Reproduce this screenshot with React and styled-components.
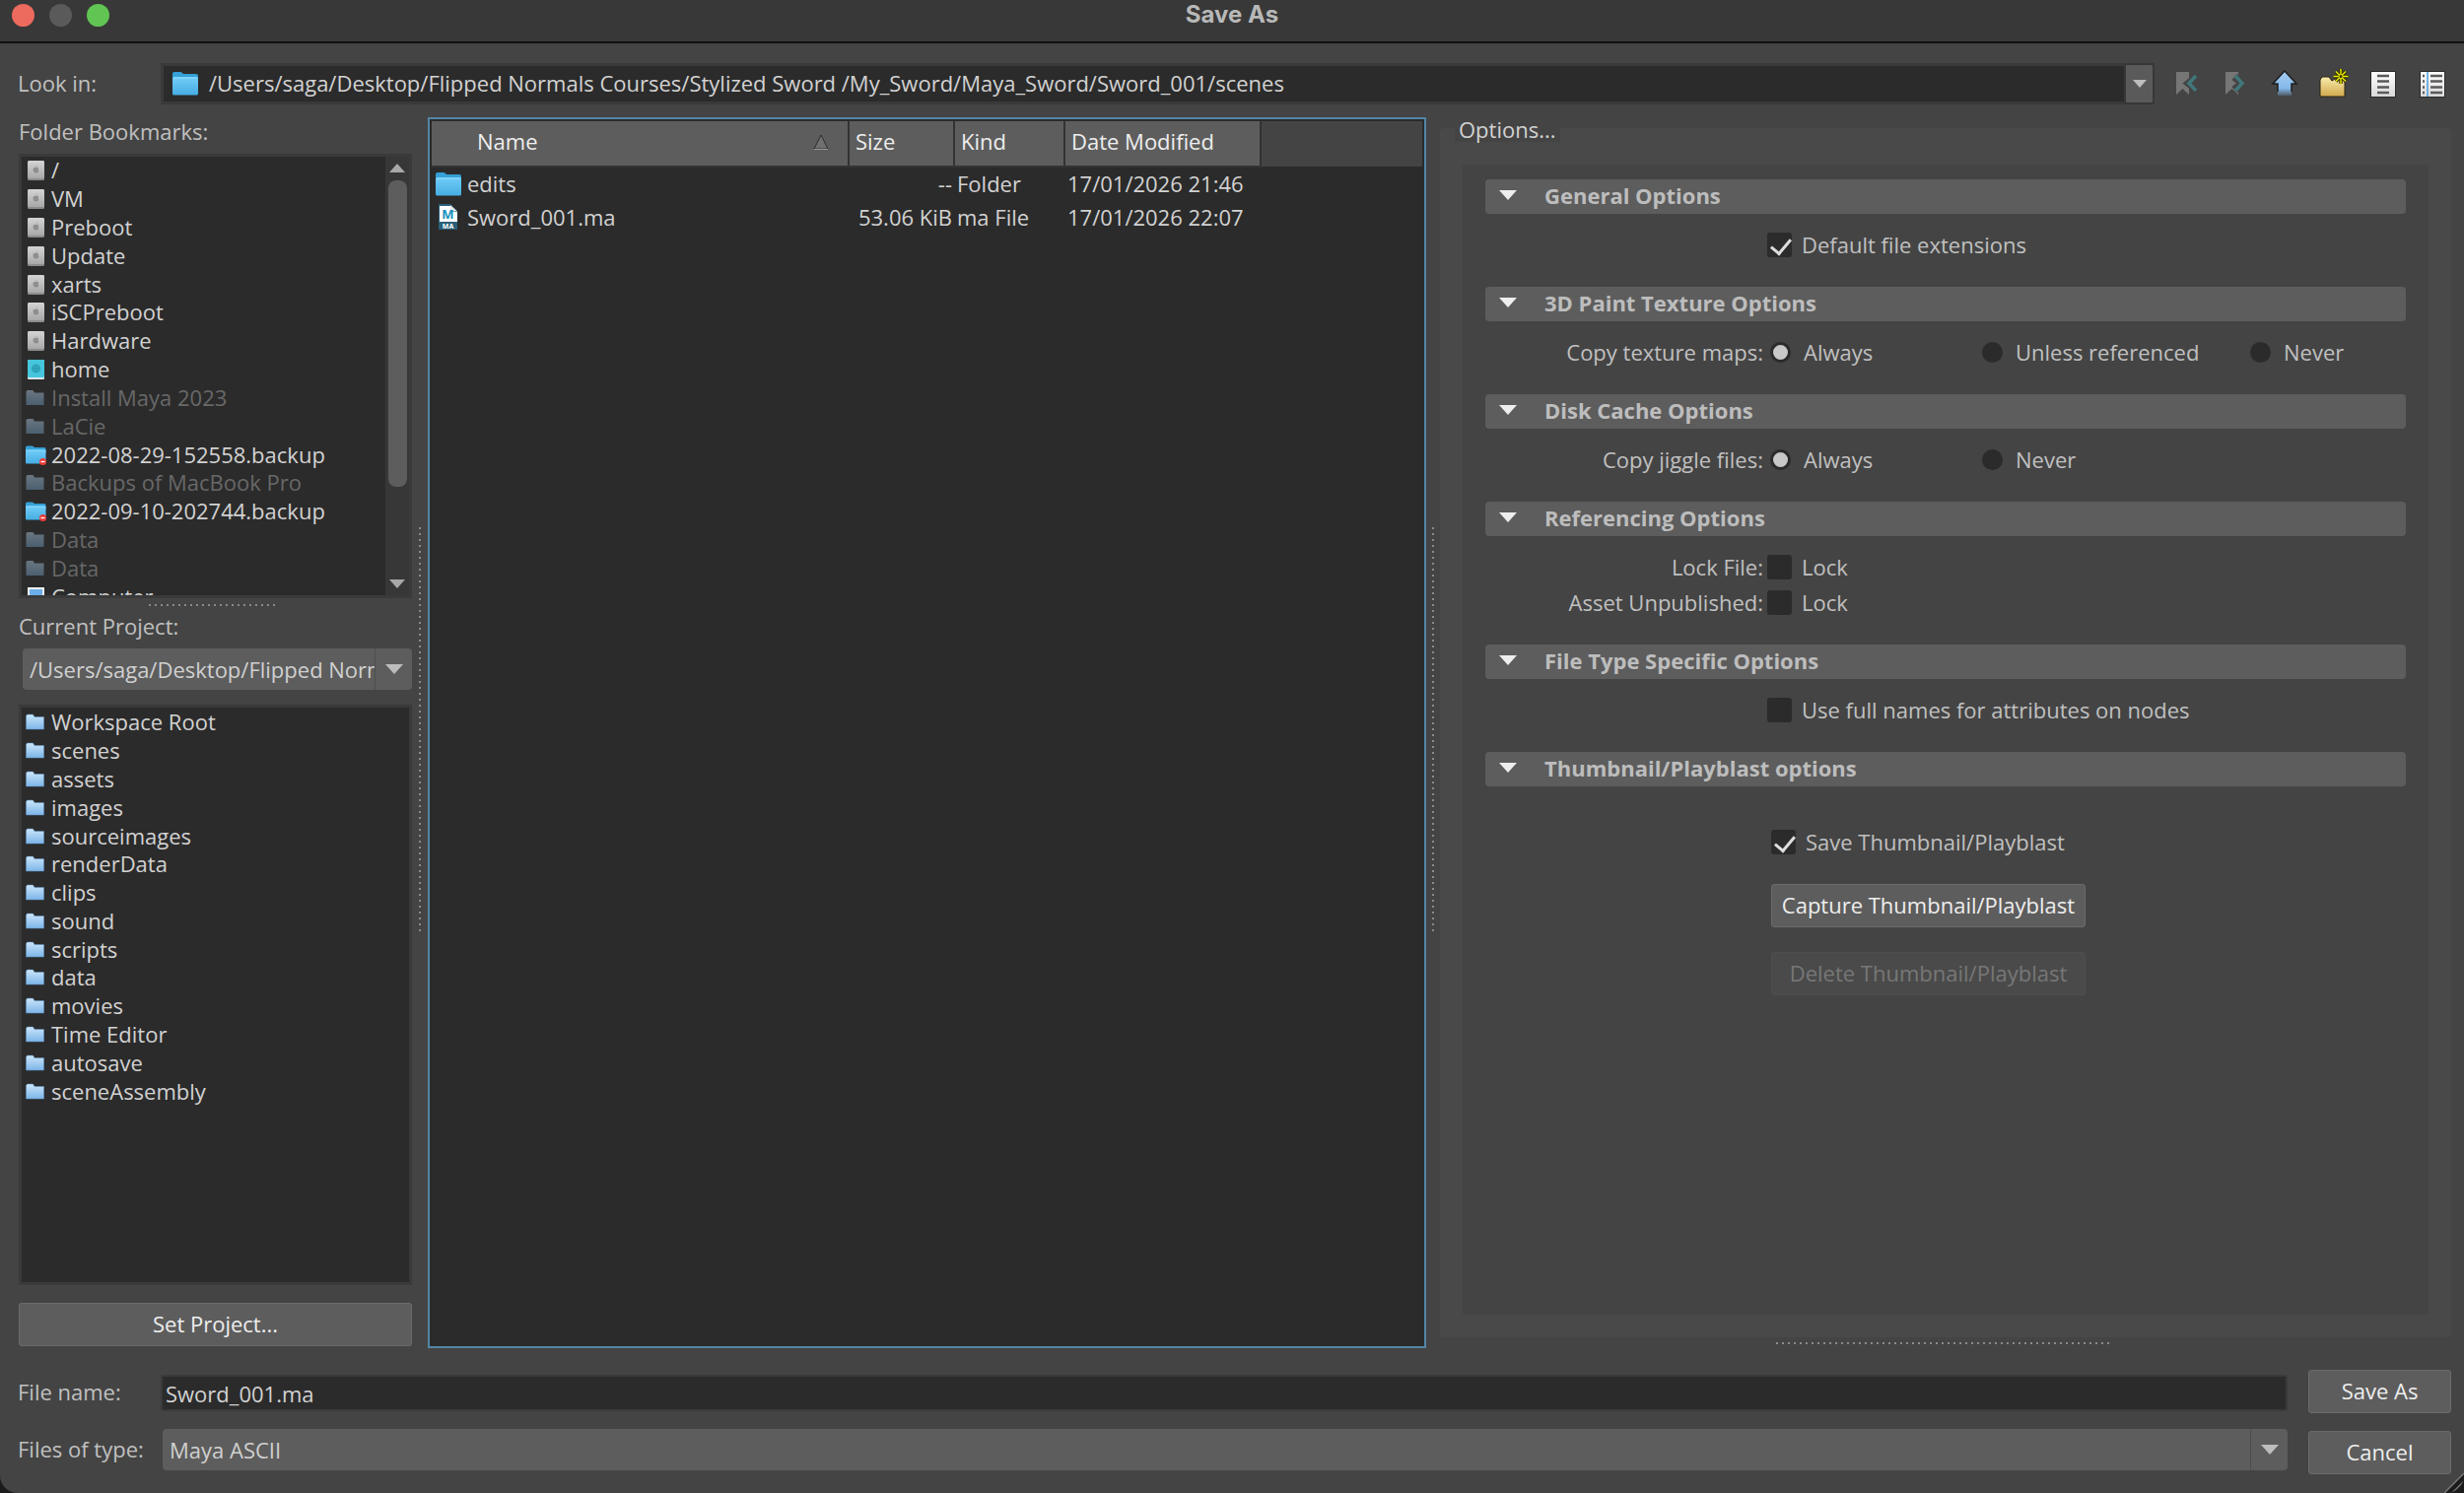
import styled, { createGlobalStyle, css } from "styled-components";

const bookmarks = [
    { name: "/", icon: "drive" },
    { name: "VM", icon: "drive" },
    { name: "Preboot", icon: "drive" },
    { name: "Update", icon: "drive" },
    { name: "xarts", icon: "drive" },
    { name: "iSCPreboot", icon: "drive" },
    { name: "Hardware", icon: "drive" },
    { name: "home", icon: "network" },
    { name: "Install Maya 2023", icon: "missing" },
    { name: "LaCie", icon: "missing" },
    { name: "2022-08-29-152558.backup", icon: "locked" },
    { name: "Backups of MacBook Pro", icon: "missing" },
    { name: "2022-09-10-202744.backup", icon: "locked" },
    { name: "Data", icon: "missing" },
    { name: "Data", icon: "missing" },
    { name: "Computer", icon: "computer" },
];

const projectFolders = [
    "Workspace Root",
    "scenes",
    "assets",
    "images",
    "sourceimages",
    "renderData",
    "clips",
    "sound",
    "scripts",
    "data",
    "movies",
    "Time Editor",
    "autosave",
    "sceneAssembly",
];

const files = [
    { name: "edits", size: "--", kind: "Folder", date: "17/01/2026 21:46", icon: "folder" },
    { name: "Sword_001.ma", size: "53.06 KiB", kind: "ma File", date: "17/01/2026 22:07", icon: "maya" },
];

function BlueFolder({ width = 28, height = 24 }) {
    return (
        <svg width={width} height={height} viewBox="0 0 28 24">
            <path d="M1 2q0-2 2-2h6q1 0 2 1l1 1h13q2 0 2 2v4H1z" fill="#35a0d6" />
            <path d="M1 6.500q0-1.500 2-1.500h22q2 0 2 1.500V22q0 1.500-1.500 1.500h-23Q1 23.500 1 22z" fill="url(#blueFolder)" />
            <path d="M2 6h24" stroke="#8ddcff" strokeWidth="1" />
        </svg>
    );
}

function Defs() {
    return (
        <svg width="0" height="0" aria-hidden="true">
            <defs>
                <linearGradient id="blueFolder" x1="0" y1="0" x2="0" y2="1">
                    <stop offset="0" stopColor="#72cdf8" />
                    <stop offset="1" stopColor="#46ade2" />
                </linearGradient>
                <linearGradient id="paleFolder" x1="0" y1="0" x2="0" y2="1">
                    <stop offset="0" stopColor="#cbe6fb" />
                    <stop offset="1" stopColor="#7db5e8" />
                </linearGradient>
                <linearGradient id="dimFolder" x1="0" y1="0" x2="0" y2="1">
                    <stop offset="0" stopColor="#6a7680" />
                    <stop offset="1" stopColor="#4b5f70" />
                </linearGradient>
                <linearGradient id="driveBody" x1="0" y1="0" x2="0" y2="1">
                    <stop offset="0" stopColor="#d4d4d4" />
                    <stop offset="1" stopColor="#a8a8a8" />
                </linearGradient>
                <linearGradient id="upArrow" x1="0" y1="0" x2="0" y2="1">
                    <stop offset="0" stopColor="#a5cdf2" />
                    <stop offset="0.7" stopColor="#84b8ea" />
                    <stop offset="1" stopColor="#4f5b66" />
                </linearGradient>
                <linearGradient id="newFolder" x1="0" y1="0" x2="0" y2="1">
                    <stop offset="0" stopColor="#f8ecae" />
                    <stop offset="1" stopColor="#d3a94c" />
                </linearGradient>
                <linearGradient id="paper" x1="0" y1="0" x2="0" y2="1">
                    <stop offset="0" stopColor="#ffffff" />
                    <stop offset="1" stopColor="#d8d8d8" />
                </linearGradient>
            </defs>
        </svg>
    );
}

function PlaceIcon({ type }) {
    if (type === "drive") {
        return (
            <svg width="22" height="22" viewBox="0 0 22 22">
                <rect x="3" y="1" width="17" height="20" rx="1.500" fill="#8c8c8c" />
                <rect x="3" y="1" width="17" height="18" rx="1.500" fill="url(#driveBody)" />
                <path d="M11.500 7.500q0-1.500 1.300-2.200q.1 1.500-1.300 2.200zM8.500 10q.2-2.200 2-2.200l1 .3 1-.3q1 0 1.700.9-1.200 1.500.2 2.700-.7 2.100-1.800 2.100l-1.100-.3-1.100.3Q8.600 13 8.500 10z" fill="#8e8e8e" />
            </svg>
        );
    }
    if (type === "network") {
        return (
            <svg width="22" height="22" viewBox="0 0 22 22">
                <rect x="3" y="1" width="17" height="20" rx="1" fill="#d9e4e6" />
                <rect x="3" y="1" width="17" height="18" rx="1" fill="#45c6dc" />
                <circle cx="11.500" cy="10" r="4" fill="#35aac2" stroke="#2a9bb3" />
                <path d="M7.500 10h8M11.500 6v8" stroke="#2a9bb3" strokeWidth="0.800" />
            </svg>
        );
    }
    if (type === "computer") {
        return (
            <svg width="22" height="22" viewBox="0 0 22 22">
                <rect x="3" y="1" width="17" height="15" fill="#f2f2f2" />
                <rect x="5" y="3" width="13" height="11" fill="#6caeea" />
                <path d="M8 19h7" stroke="#d0d0d0" strokeWidth="3" />
            </svg>
        );
    }
    if (type === "locked") {
        return (
            <svg width="22" height="22" viewBox="0 0 22 22">
                <path d="M1 3q0-1.500 1.500-1.500H8l2 1.500h10q1.500 0 1.500 1.500V9H1z" fill="#35a0d6" />
                <rect x="1" y="5.500" width="20.500" height="14" rx="1" fill="url(#blueFolder)" />
                <path d="M1.500 6h19.500" stroke="#8ddcff" />
                <circle cx="18.500" cy="17.500" r="3.500" fill="#ec3b34" />
                <path d="M16.500 17.500h4" stroke="#fff" strokeWidth="1.300" />
            </svg>
        );
    }
    const dim = type === "missing";
    return (
        <svg width="22" height="22" viewBox="0 0 22 22">
            <path
                d="M1.500 4.500L2.500 3h6l1.500 2.500h9.500V18h-18z"
                fill={dim ? "url(#dimFolder)" : "url(#paleFolder)"}
                stroke={dim ? "none" : "#5f93c4"}
                strokeWidth="0.500"
            />
        </svg>
    );
}

function MayaFile() {
    return (
        <svg width="28" height="28" viewBox="0 0 28 28">
            <path d="M4 1h12l7 7v19H4z" fill="#2a6079" />
            <path d="M5 3h11v6h7v10H5z" fill="#fff" />
            <path d="M16 2v6.500h7z" fill="#e8e8e8" />
            <text x="13.500" y="16" textAnchor="middle" fontFamily="Open Sans" fontWeight="700" fontSize="13" fill="#1490bd">M</text>
            <text x="13.500" y="26" textAnchor="middle" fontFamily="Open Sans" fontWeight="700" fontSize="7" fill="#fff">MA</text>
        </svg>
    );
}

function BackIcon() {
    return (
        <svg width="28" height="32" viewBox="0 0 28 32">
            <path d="M4 4h13v23l-6.500-6L4 27z" fill="#767676" />
            <path d="M24 9l-8 6.500 8 6.500" fill="none" stroke="#444" strokeWidth="7" />
            <path d="M24 8l-7 7.500 7 7.500" fill="none" stroke="#40777b" strokeWidth="3.500" />
        </svg>
    );
}

function ForwardIcon() {
    return (
        <svg width="28" height="32" viewBox="0 0 28 32">
            <path d="M4 4h13v23l-6.500-6L4 27z" fill="#767676" />
            <path d="M13 9l8 6.500-8 6.500" fill="none" stroke="#444" strokeWidth="8" />
            <path d="M14 8l7 7.500-7 7.500" fill="none" stroke="#40777b" strokeWidth="3.500" />
        </svg>
    );
}

function UpIcon() {
    return (
        <svg width="28" height="32" viewBox="0 0 28 32">
            <path d="M14 3l12 13h-5v12H7V16H2z" fill="url(#upArrow)" />
            <path d="M7 24V16H2L14 3l12 13h-5v8" fill="none" stroke="#1c1c1c" strokeWidth="1.500" />
        </svg>
    );
}

function NewFolderIcon() {
    return (
        <svg width="32" height="32" viewBox="0 0 32 32">
            <path d="M2 12l2-3h7l3 4 3-2h10v18H2z" fill="url(#newFolder)" stroke="#2b2412" />
            <path d="M23 1v15M15.500 8.500h15M18 3.500l10 10M28 3.500l-10 10" stroke="#333300" strokeWidth="3.500" />
            <path d="M23 1v15M15.500 8.500h15M18 3.500l10 10M28 3.500l-10 10" stroke="#e6e600" strokeWidth="1.500" />
            <circle cx="23" cy="8.500" r="1.500" fill="#333300" />
        </svg>
    );
}

function ListIcon() {
    return (
        <svg width="28" height="32" viewBox="0 0 28 32">
            <rect x="1.500" y="3.500" width="25" height="26" fill="url(#paper)" stroke="#2a2a2a" />
            <path d="M8 8h12M8 13.500h12M8 19.500h12M8 25h12" stroke="#5a5a5a" strokeWidth="2.500" />
        </svg>
    );
}

function DetailIcon() {
    return (
        <svg width="28" height="32" viewBox="0 0 28 32">
            <rect x="1.500" y="3.500" width="25" height="26" fill="url(#paper)" stroke="#2a2a2a" />
            <path d="M4 8h2M4 13.500h2M4 19.500h2M4 25h2M12 8h12M12 13.500h12M12 19.500h12M12 25h12" stroke="#5a5a5a" strokeWidth="2.500" />
            <path d="M9 4v25" stroke="#4a9fe0" strokeWidth="1.500" />
        </svg>
    );
}

function Triangle({ up, width = 18, height = 10, color = "#bdbdbd" }) {
    return (
        <svg width={width} height={height} viewBox="0 0 18 10">
            <path d={up ? "M0 10L9 0l9 10z" : "M0 0h18L9 10z"} fill={color} />
        </svg>
    );
}

function Section({ title, children, large }) {
    return (
        <OptionSection>
            <SectionHeader type="button">
                <Triangle color="#eee" />
                <span>{title}</span>
            </SectionHeader>
            <SectionBody $large={large}>{children}</SectionBody>
        </OptionSection>
    );
}

function Check({ id, label, checked }) {
    return (
        <Choice htmlFor={id}>
            <Checkbox id={id} type="checkbox" defaultChecked={checked} />
            {label}
        </Choice>
    );
}

function Radio({ name, label, checked }) {
    return (
        <Choice>
            <RadioInput type="radio" name={name} defaultChecked={checked} />
            {label}
        </Choice>
    );
}

function App() {
    return (
        <>
            <GlobalStyle />
            <Defs />
            <Dialog>
                <TitleBar>
                    <Light $color="#ed6a5e" aria-label="Close" />
                    <Light $color="#5a5a5a" aria-label="Minimise" />
                    <Light $color="#61c554" aria-label="Zoom" />
                    <Title>Save As</Title>
                </TitleBar>

                <LookIn>
                    <FieldLabel htmlFor="look-in">Look in:</FieldLabel>
                    <PathField>
                        <BlueFolder />
                        <PathInput id="look-in" defaultValue="/Users/saga/Desktop/Flipped Normals Courses/Stylized Sword /My_Sword/Maya_Sword/Sword_001/scenes" />
                        <PathButton aria-label="Recent folders"><Triangle width={14} height={8} /></PathButton>
                    </PathField>
                    <Toolbar>
                        <ToolButton aria-label="Back"><BackIcon /></ToolButton>
                        <ToolButton aria-label="Forward"><ForwardIcon /></ToolButton>
                        <ToolButton aria-label="Parent folder"><UpIcon /></ToolButton>
                        <ToolButton aria-label="New folder"><NewFolderIcon /></ToolButton>
                        <ToolButton aria-label="List view"><ListIcon /></ToolButton>
                        <ToolButton aria-label="Detail view"><DetailIcon /></ToolButton>
                    </Toolbar>
                </LookIn>

                <Main>
                    <Sidebar>
                        <SideLabel>Folder Bookmarks:</SideLabel>
                        <BookmarkPanel>
                            <List $height={461}>
                                {bookmarks.map((item, i) => (
                                    <ListItem key={i} $dim={item.icon === "missing"}>
                                        <PlaceIcon type={item.icon} />
                                        <span>{item.name}</span>
                                    </ListItem>
                                ))}
                            </List>
                            <Scrollbar>
                                <Triangle up width={16} height={9} color="#a8a8a8" />
                                <ScrollThumb />
                                <Triangle width={16} height={9} color="#a8a8a8" />
                            </Scrollbar>
                        </BookmarkPanel>
                        <HandleRow><Handle $length={130} /></HandleRow>
                        <SideLabel as="label" htmlFor="project">Current Project:</SideLabel>
                        <ProjectSelect>
                            <Select id="project">
                                <option>/Users/saga/Desktop/Flipped Normals Courses</option>
                            </Select>
                            <SelectArrow><Triangle /></SelectArrow>
                        </ProjectSelect>
                        <ProjectPanel>
                            <List $height={403}>
                                {projectFolders.map((name) => (
                                    <ListItem key={name}>
                                        <PlaceIcon type="folder" />
                                        <span>{name}</span>
                                    </ListItem>
                                ))}
                            </List>
                        </ProjectPanel>
                        <Button>Set Project...</Button>
                    </Sidebar>

                    <Splitter><Handle $vertical $length={412} /></Splitter>

                    <FilePanel>
                        <FileTable>
                            <colgroup>
                                <col width="423" />
                                <col width="107" />
                                <col width="112" />
                                <col width="199" />
                                <col />
                            </colgroup>
                            <thead>
                                <tr>
                                    <NameHead>
                                        <div>
                                            Name
                                            <svg width="18" height="18" viewBox="0 0 18 18">
                                                <path d="M9 2L2 16h14z" fill="#707070" stroke="#2b2b2b" />
                                                <path d="M2 16.500h14" stroke="#999" />
                                            </svg>
                                        </div>
                                    </NameHead>
                                    <Head>Size</Head>
                                    <Head>Kind</Head>
                                    <Head>Date Modified</Head>
                                    <EmptyHead />
                                </tr>
                            </thead>
                            <tbody>
                                {files.map((file) => (
                                    <tr key={file.name}>
                                        <Cell>
                                            <FileName>
                                                {file.icon === "folder" ? <BlueFolder /> : <MayaFile />}
                                                {file.name}
                                            </FileName>
                                        </Cell>
                                        <Cell $right>{file.size}</Cell>
                                        <Cell>{file.kind}</Cell>
                                        <Cell>{file.date}</Cell>
                                        <Cell />
                                    </tr>
                                ))}
                            </tbody>
                        </FileTable>
                    </FilePanel>

                    <Splitter><Handle $vertical $length={412} /></Splitter>

                    <OptionsColumn>
                        <OptionsGroup>
                            <Legend>Options...</Legend>
                            <OptionsArea>
                                <Section title="General Options">
                                    <OptionRow>
                                        <span />
                                        <Check id="default-ext" label="Default file extensions" checked />
                                    </OptionRow>
                                </Section>
                                <Section title="3D Paint Texture Options">
                                    <OptionRow>
                                        <span>Copy texture maps:</span>
                                        <RadioGroup>
                                            <Radio name="texture" label="Always" checked />
                                            <Radio name="texture" label="Unless referenced" />
                                            <Radio name="texture" label="Never" />
                                        </RadioGroup>
                                    </OptionRow>
                                </Section>
                                <Section title="Disk Cache Options">
                                    <OptionRow>
                                        <span>Copy jiggle files:</span>
                                        <RadioGroup>
                                            <Radio name="jiggle" label="Always" checked />
                                            <Radio name="jiggle" label="Never" />
                                        </RadioGroup>
                                    </OptionRow>
                                </Section>
                                <Section title="Referencing Options">
                                    <OptionRow>
                                        <span>Lock File:</span>
                                        <Check id="lock-file" label="Lock" />
                                    </OptionRow>
                                    <OptionRow>
                                        <span>Asset Unpublished:</span>
                                        <Check id="lock-asset" label="Lock" />
                                    </OptionRow>
                                </Section>
                                <Section title="File Type Specific Options">
                                    <OptionRow>
                                        <span />
                                        <Check id="full-names" label="Use full names for attributes on nodes" />
                                    </OptionRow>
                                </Section>
                                <Section title="Thumbnail/Playblast options" large>
                                    <OptionRow $indent>
                                        <span />
                                        <Check id="save-thumb" label="Save Thumbnail/Playblast" checked />
                                    </OptionRow>
                                    <OptionRow $indent>
                                        <span />
                                        <Button $wide>Capture Thumbnail/Playblast</Button>
                                    </OptionRow>
                                    <OptionRow $indent>
                                        <span />
                                        <Button $wide disabled>Delete Thumbnail/Playblast</Button>
                                    </OptionRow>
                                </Section>
                            </OptionsArea>
                        </OptionsGroup>
                        <HandleRow $short><Handle $length={340} /></HandleRow>
                    </OptionsColumn>
                </Main>

                <Footer>
                    <Fields>
                        <FieldLabel htmlFor="file-name">File name:</FieldLabel>
                        <NameInput id="file-name" defaultValue="Sword_001.ma" />
                        <FieldLabel htmlFor="file-type">Files of type:</FieldLabel>
                        <TypeSelect>
                            <Select id="file-type">
                                <option>Maya ASCII</option>
                            </Select>
                            <SelectArrow><Triangle /></SelectArrow>
                        </TypeSelect>
                    </Fields>
                    <Actions>
                        <Button>Save As</Button>
                        <Button>Cancel</Button>
                    </Actions>
                </Footer>
                <SizeGrip width="20" height="20" viewBox="0 0 20 20">
                    <path d="M20 0v20H0z" fill="#1b1b1b" />
                    <path d="M0 20L20 0M8 20L20 8" stroke="#777" strokeWidth="1.500" />
                </SizeGrip>
            </Dialog>
        </>
    );
}

export default App;

const GlobalStyle = createGlobalStyle`
    * {
        box-sizing: border-box;
    }
    body {
        margin: 0;
        background: #1b1b1b;
        color: #c0c0c0;
        font: 500 22px/29px "Open Sans", "Noto Sans", sans-serif;
    }
    button, input, select {
        font: inherit;
        color: inherit;
        margin: 0;
    }
    svg {
        display: block;
        flex: none;
    }
`;

const inset = css`
    background: #2b2b2b;
    border: 3px solid #3a3a3a;
`;

const Dialog = styled.div`
    position: relative;
    display: flex;
    flex-direction: column;
    min-height: 100vh;
    background: #444;
    border-radius: 0 0 18px 18px;
    overflow: hidden;
`;

const TitleBar = styled.header`
    display: flex;
    align-items: center;
    gap: 15px;
    height: 44px;
    padding: 0 12px 12px;
    background: #383838;
    border-bottom: 2px solid #111;
`;

const Light = styled.button`
    width: 23px;
    height: 23px;
    padding: 0;
    border: none;
    border-radius: 50%;
    background: ${(p) => p.$color};
`;

const Title = styled.h1`
    flex: 1;
    margin: 0 114px 2px 0;
    font-family: Inter, sans-serif;
    font-size: 24px;
    font-weight: 700;
    text-align: center;
    color: #b8b8b8;
`;

const LookIn = styled.div`
    display: flex;
    align-items: center;
    height: 42px;
    margin: 20px 18px 13px;
`;

const FieldLabel = styled.label`
    flex: none;
    width: 145px;
    padding-bottom: 2px;
`;

const PathField = styled.div`
    ${inset}
    flex: 1;
    display: flex;
    align-items: center;
    height: 42px;
    padding-left: 8px;
    border-right: none;
    color: #d2d2d2;
`;

const PathInput = styled.input`
    flex: 1;
    min-width: 0;
    height: 36px;
    padding: 0 10px 2px;
    border: none;
    outline: none;
    background: transparent;
`;

const PathButton = styled.button`
    display: flex;
    align-items: center;
    justify-content: center;
    width: 31px;
    height: 42px;
    padding: 0;
    border: 2px solid #373737;
    border-radius: 3px;
    background: #5a5a5a;
`;

const Toolbar = styled.div`
    display: flex;
    align-items: center;
    gap: 22px;
    padding-left: 18px;
`;

const ToolButton = styled.button`
    display: flex;
    align-items: center;
    justify-content: center;
    width: 28px;
    height: 32px;
    padding: 0;
    border: none;
    background: none;
`;

const Main = styled.main`
    flex: 1;
    display: grid;
    grid-template-columns: 399px 16px minmax(0, 1013fr) 14px minmax(0, 1026fr);
    padding: 0 13px 0 19px;
`;

const Sidebar = styled.aside`
    display: flex;
    flex-direction: column;
    padding-bottom: 2px;
`;

const SideLabel = styled.div`
    display: block;
    height: 37px;
    line-height: 28px;
`;

const BookmarkPanel = styled.div`
    ${inset}
    display: flex;
    height: 451px;
    overflow: hidden;
`;

const ProjectPanel = styled.div`
    ${inset}
    flex: 1;
    margin: 15px 0 18px;
    padding-top: 1px;
`;

const List = styled.ul`
    flex: 1;
    display: grid;
    grid-auto-rows: 1fr;
    height: ${(p) => p.$height}px;
    margin: 0;
    padding: 0 0 0 3px;
    list-style: none;
`;

const ListItem = styled.li`
    display: flex;
    align-items: center;
    gap: 5px;
    color: ${(p) => (p.$dim ? "#686868" : "#d2d2d2")};
    line-height: 26px;
    white-space: nowrap;
    span {
        padding-bottom: 2px;
    }
`;

const Scrollbar = styled.div`
    display: flex;
    flex-direction: column;
    align-items: center;
    justify-content: space-between;
    gap: 8px;
    width: 24px;
    padding: 7px 0;
    background: #373737;
`;

const ScrollThumb = styled.div`
    width: 19px;
    height: 311px;
    margin-bottom: auto;
    border-radius: 8px;
    background: #5d5d5d;
`;

const HandleRow = styled.div`
    display: flex;
    align-items: center;
    justify-content: center;
    height: ${(p) => (p.$short ? 11 : 14)}px;
    padding-right: 5px;
`;

const Handle = styled.div`
    flex: none;
    width: ${(p) => (p.$vertical ? 2 : p.$length)}px;
    height: ${(p) => (p.$vertical ? p.$length : 2)}px;
    background: repeating-linear-gradient(${(p) => (p.$vertical ? "180deg" : "90deg")}, #8a8a8a 0 2px, transparent 2px 6px);
`;

const Splitter = styled.div`
    display: flex;
    align-items: center;
    justify-content: center;
    padding-bottom: 6px;
`;

const SelectBox = styled.div`
    display: flex;
    height: 42px;
    border-radius: 4px;
    background: #5d5d5d;
    color: #d0d0d0;
    overflow: hidden;
`;

const ProjectSelect = styled(SelectBox)`
    margin-left: 4px;
`;

const TypeSelect = styled(SelectBox)`
    margin-left: 2px;
`;

const Select = styled.select`
    flex: 1;
    min-width: 0;
    padding: 0 0 0 7px;
    border: none;
    outline: none;
    appearance: none;
    background: transparent;
`;

const SelectArrow = styled.span`
    display: flex;
    align-items: center;
    justify-content: center;
    width: 38px;
    border-left: 1px solid #4d4d4d;
    pointer-events: none;
`;

const Button = styled.button`
    height: 44px;
    width: ${(p) => (p.$wide ? "319px" : "100%")};
    padding: 0 0 2px;
    border: 1px solid #6b6b6b;
    border-radius: 3px;
    background: #5d5d5d;
    color: #eee;
    white-space: nowrap;
    &:disabled {
        border-color: #4e4e4e;
        background: #4a4a4a;
        color: #777;
    }
`;

const FilePanel = styled.div`
    border: 2px solid #5285a6;
    padding: 2px;
    background: #2b2b2b;
`;

const FileTable = styled.table`
    width: 100%;
    table-layout: fixed;
    border-collapse: collapse;
    color: #d2d2d2;
`;

const Head = styled.th`
    height: 46px;
    padding: 0 0 4px 6px;
    border-right: 2px solid #333;
    border-bottom: 2px solid #333;
    background: #5d5d5d;
    color: #eee;
    font-weight: 500;
    text-align: left;
    white-space: nowrap;
`;

const NameHead = styled(Head)`
    padding: 0 18px 4px 46px;
    div {
        display: flex;
        align-items: center;
        justify-content: space-between;
    }
`;

const EmptyHead = styled.td`
    padding: 0;
    background: #444;
`;

const Cell = styled.td`
    height: 34px;
    padding: 0 2px 0 3px;
    text-align: ${(p) => (p.$right ? "right" : "left")};
    white-space: nowrap;
`;

const FileName = styled.div`
    display: flex;
    align-items: center;
    gap: 5px;
`;

const OptionsColumn = styled.div`
    display: flex;
    flex-direction: column;
`;

const OptionsGroup = styled.section`
    flex: 1;
    display: flex;
    flex-direction: column;
    margin-top: 11px;
    padding: 0 23px 23px;
    border-radius: 4px;
    background: #494949;
`;

const Legend = styled.h2`
    align-self: flex-start;
    height: 26px;
    margin: -12px 0 23px -8px;
    padding: 0 4px;
    background: #444;
    color: #d2d2d2;
    font-size: 22px;
    font-weight: 500;
    line-height: 26px;
`;

const OptionsArea = styled.div`
    flex: 1;
    padding: 15px 23px;
    background: #444;
`;

const OptionSection = styled.section`
    display: flex;
    flex-direction: column;
`;

const SectionHeader = styled.button`
    display: flex;
    align-items: center;
    gap: 28px;
    height: 35px;
    padding: 0 14px 2px;
    border: none;
    border-radius: 4px;
    background: #5d5d5d;
    color: #bdbdbd;
    font-weight: 700;
    svg {
        margin-bottom: 2px;
    }
`;

const SectionBody = styled.div`
    display: flex;
    flex-direction: column;
    gap: ${(p) => (p.$large ? 25 : 0)}px;
    padding: ${(p) => (p.$large ? "38px 0 0" : "13px 0 25px")};
`;

const OptionRow = styled.div`
    display: grid;
    grid-template-columns: ${(p) => (p.$indent ? 286 : 282)}px 1fr;
    column-gap: 4px;
    align-items: center;
    min-height: 36px;
    > span {
        text-align: right;
    }
`;

const RadioGroup = styled.div`
    display: grid;
    grid-template-columns: 215px 272px auto;
    padding-left: 3px;
    label {
        gap: 13px;
    }
`;

const Choice = styled.label`
    display: flex;
    align-items: center;
    gap: 10px;
    white-space: nowrap;
`;

const Checkbox = styled.input`
    appearance: none;
    width: 25px;
    height: 25px;
    border-radius: 3px;
    background: #2b2b2b;
    &:checked::after {
        content: "";
        display: block;
        width: 9px;
        height: 17px;
        margin: 2px 0 0 8px;
        border: solid #ddd;
        border-width: 0 3px 3px 0;
        transform: rotate(40deg);
    }
`;

const RadioInput = styled.input`
    appearance: none;
    width: 21px;
    height: 21px;
    border: 3px solid #2b2b2b;
    border-radius: 50%;
    background: #2b2b2b;
    &:checked {
        background: #c8c8c8;
    }
`;

const Footer = styled.footer`
    display: flex;
    gap: 21px;
    padding: 22px 13px 19px 18px;
`;

const Fields = styled.div`
    flex: 1;
    display: grid;
    grid-template-columns: 145px 1fr;
    align-items: center;
    align-content: start;
    row-gap: 18px;
    padding-top: 5px;
`;

const Actions = styled.div`
    display: flex;
    flex-direction: column;
    gap: 18px;
    width: 145px;
`;

const NameInput = styled.input`
    ${inset}
    height: 37px;
    padding: 0 3px;
    border-width: 2px;
    border-radius: 3px;
    outline: none;
    color: #d2d2d2;
`;

const SizeGrip = styled.svg`
    position: absolute;
    right: 0;
    bottom: 0;
`;
